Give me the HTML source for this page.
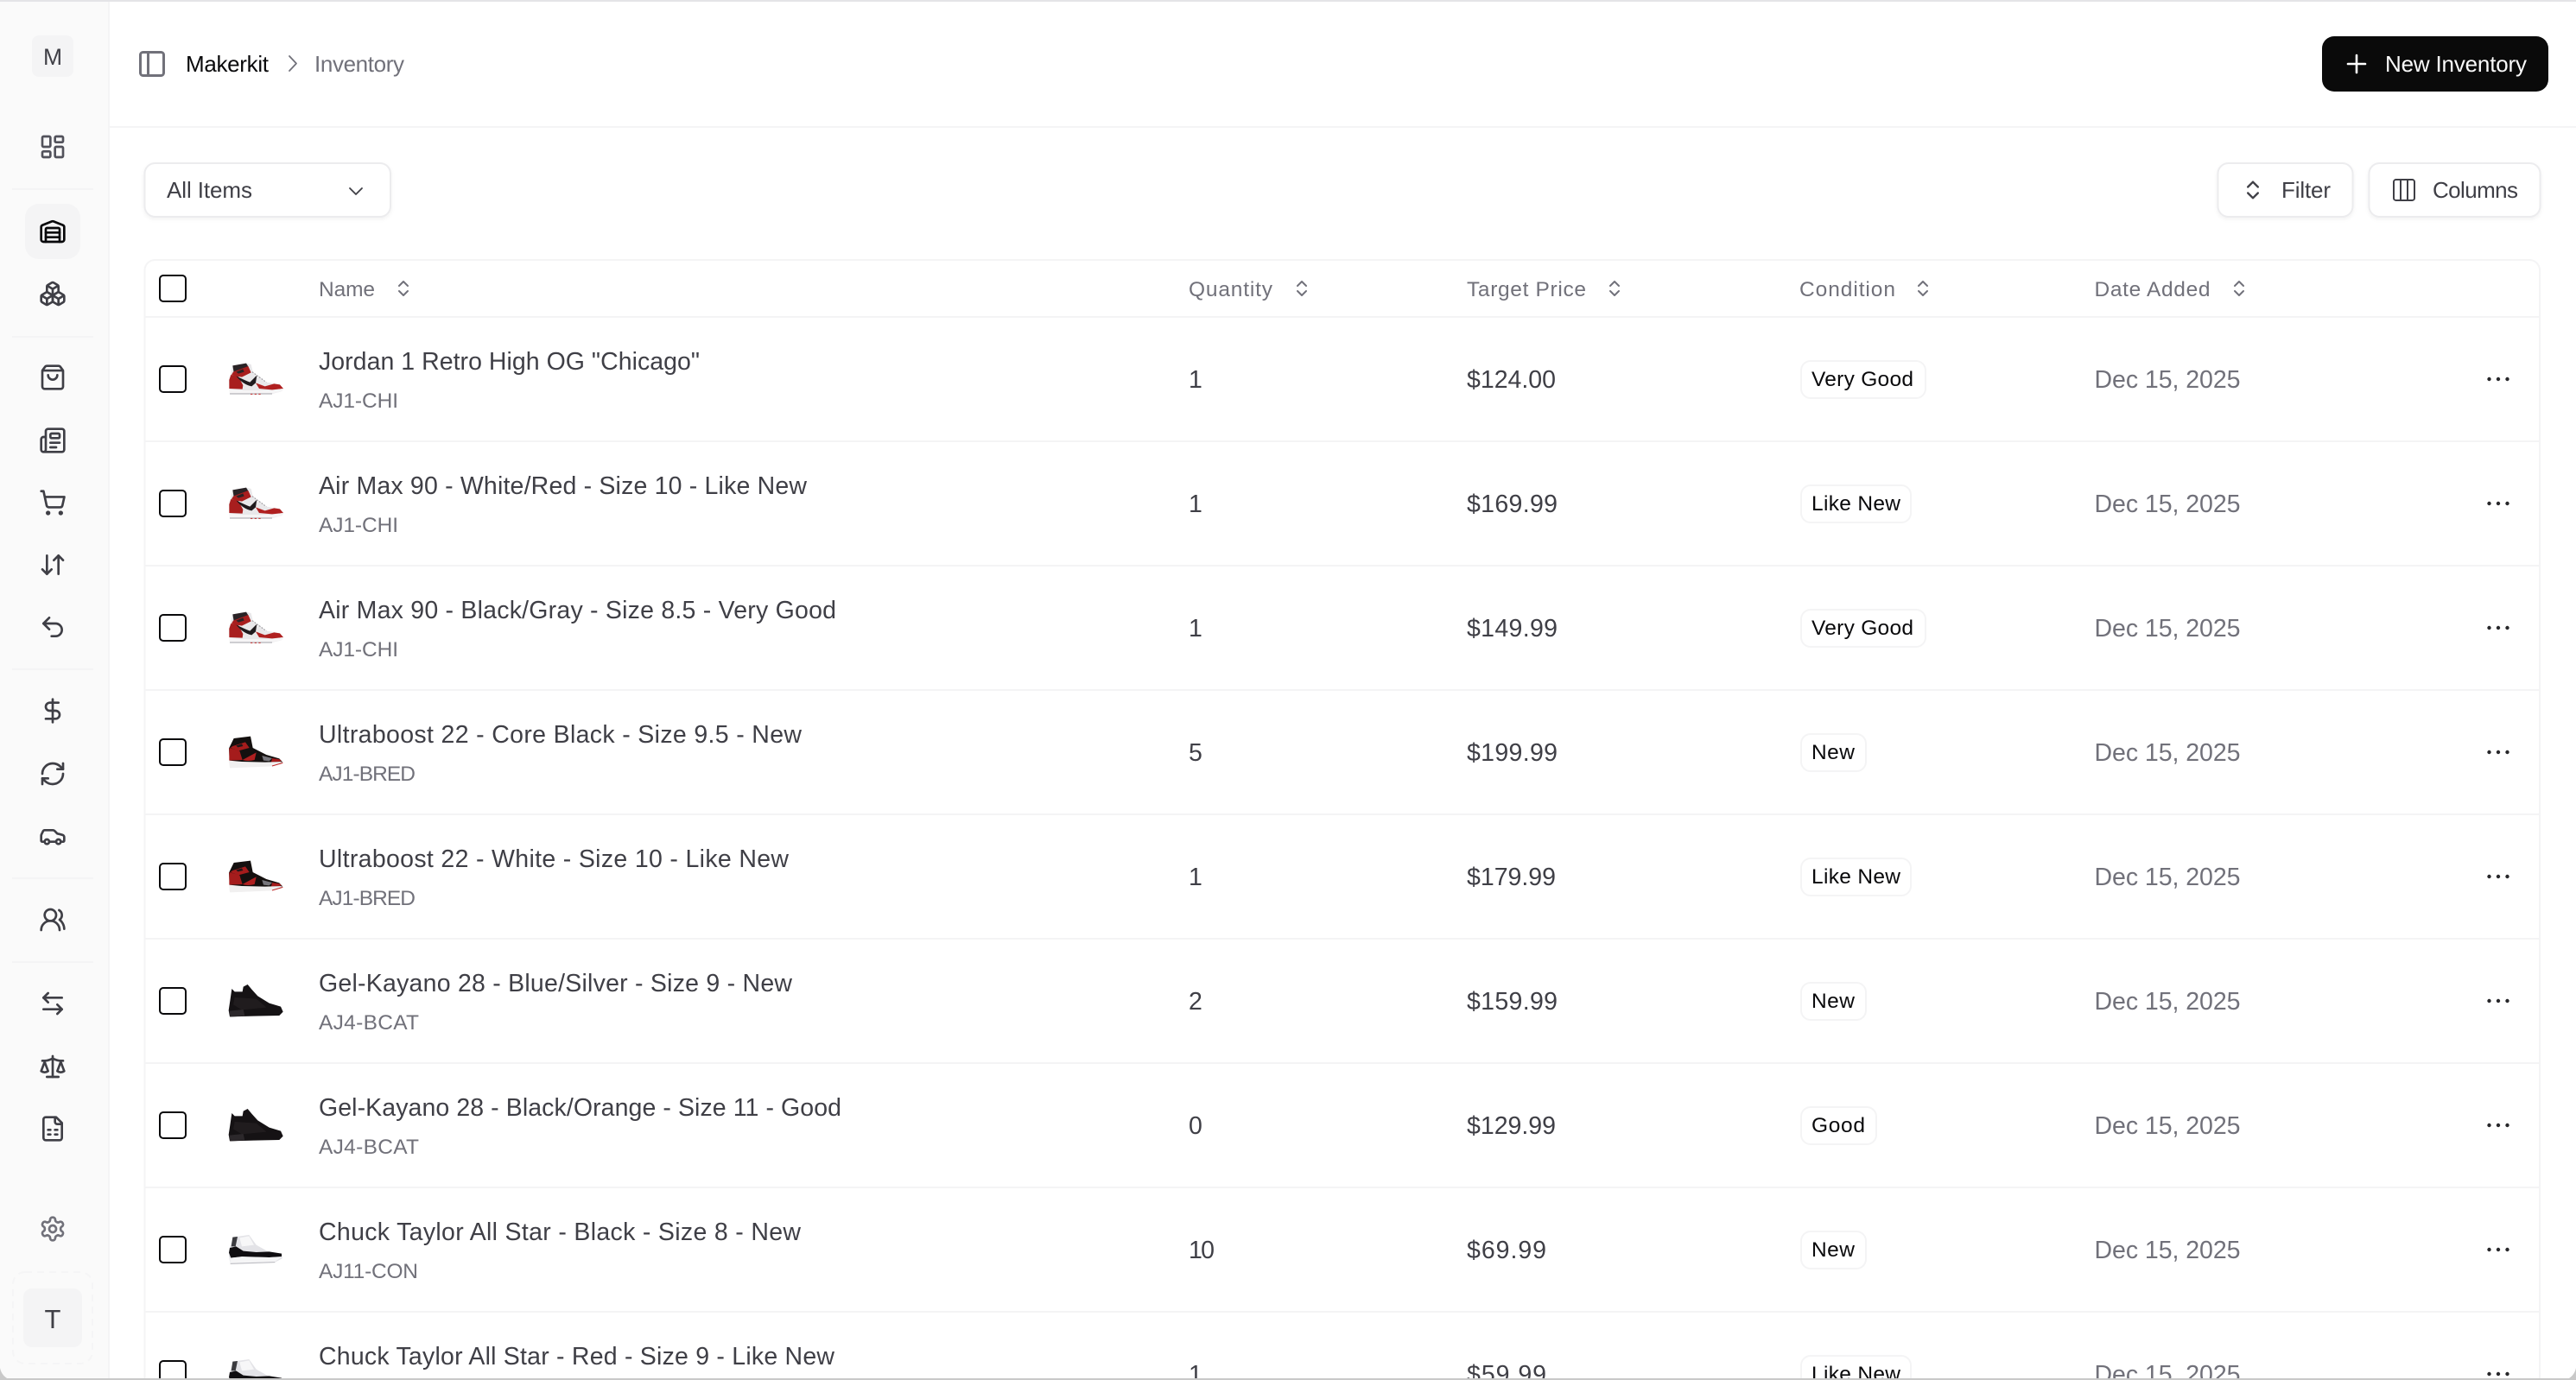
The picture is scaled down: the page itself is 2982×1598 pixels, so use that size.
<!DOCTYPE html>
<html lang="en"><head><meta charset="utf-8"><title>Inventory</title>
<style>
html,body{margin:0;padding:0;background:#fff;overflow:hidden}
svg{display:block}
text{font-family:"Liberation Sans",sans-serif;white-space:pre}
.n{font-size:28.5px;fill:#3f3f46}
.s{font-size:24.5px;fill:#71717a}
.h{font-size:24.5px;fill:#71717a}
.v{font-size:28.5px;fill:#3f3f46}
.d{font-size:28.5px;fill:#71717a}
.b{font-size:24.5px;fill:#09090b}
.t{font-size:26px}
.i{fill:none;stroke-width:2;stroke-linecap:round;stroke-linejoin:round}
</style></head><body>
<svg xmlns="http://www.w3.org/2000/svg" width="2982" height="1598" viewBox="0 0 2982 1598">
<defs>
<filter id="sh" x="-5%" y="-10%" width="110%" height="130%"><feDropShadow dx="0" dy="2" stdDeviation="2" flood-color="#000" flood-opacity=".05"/></filter>
<symbol id="dash" viewBox="0 0 24 24"><rect x="3" y="3" width="7" height="9" rx="1"/><rect x="14" y="3" width="7" height="5" rx="1"/><rect x="14" y="12" width="7" height="9" rx="1"/><rect x="3" y="16" width="7" height="5" rx="1"/></symbol>
<symbol id="ware" viewBox="0 0 24 24"><path d="M18 21V10a1 1 0 0 0-1-1H7a1 1 0 0 0-1 1v11"/><path d="M22 19a2 2 0 0 1-2 2H4a2 2 0 0 1-2-2V8.35a2 2 0 0 1 1.26-1.86l8-3.2a2 2 0 0 1 1.48 0l8 3.2A2 2 0 0 1 22 8.35z"/><path d="M6 13h12"/><path d="M6 17h12"/></symbol>
<symbol id="boxes" viewBox="0 0 24 24"><path d="M2.97 12.92A2 2 0 0 0 2 14.63v3.24a2 2 0 0 0 .97 1.71l3 1.8a2 2 0 0 0 2.06 0L12 19v-5.5l-5-3-4.03 2.42Z"/><path d="m7 16.5-4.74-2.85"/><path d="m7 16.5 5-3"/><path d="M7 16.5v5.17"/><path d="M12 13.5V19l3.97 2.38a2 2 0 0 0 2.06 0l3-1.8a2 2 0 0 0 .97-1.71v-3.24a2 2 0 0 0-.97-1.71L17 10.5l-5 3Z"/><path d="m17 16.5-5-3"/><path d="m17 16.5 4.74-2.85"/><path d="M17 16.5v5.17"/><path d="M7.97 4.42A2 2 0 0 0 7 6.13v4.37l5 3 5-3V6.13a2 2 0 0 0-.97-1.71l-3-1.8a2 2 0 0 0-2.06 0l-3 1.8Z"/><path d="M12 8 7.26 5.15"/><path d="m12 8 4.74-2.85"/><path d="M12 13.5V8"/></symbol>
<symbol id="bag" viewBox="0 0 24 24"><path d="M16 10a4 4 0 0 1-8 0"/><path d="M3.103 6.034h17.794"/><path d="M3.4 5.467a2 2 0 0 0-.4 1.2V20a2 2 0 0 0 2 2h14a2 2 0 0 0 2-2V6.667a2 2 0 0 0-.4-1.2l-2-2.667A2 2 0 0 0 17 2H7a2 2 0 0 0-1.6.8z"/></symbol>
<symbol id="news" viewBox="0 0 24 24"><path d="M15 18h-5"/><path d="M18 14h-8"/><path d="M4 22h16a2 2 0 0 0 2-2V4a2 2 0 0 0-2-2H8a2 2 0 0 0-2 2v16a2 2 0 0 1-4 0v-9a2 2 0 0 1 2-2h2"/><rect x="10" y="6" width="8" height="4" rx="1"/></symbol>
<symbol id="cart" viewBox="0 0 24 24"><circle cx="8" cy="21" r="1"/><circle cx="19" cy="21" r="1"/><path d="M2.05 2.05h2l2.66 12.42a2 2 0 0 0 2 1.58h9.78a2 2 0 0 0 1.95-1.57l1.65-7.43H5.12"/></symbol>
<symbol id="adu" viewBox="0 0 24 24"><path d="m3 16 4 4 4-4"/><path d="M7 20V4"/><path d="m21 8-4-4-4 4"/><path d="M17 4v16"/></symbol>
<symbol id="undo" viewBox="0 0 24 24"><path d="M9 14 4 9l5-5"/><path d="M4 9h10.5a5.5 5.5 0 0 1 5.5 5.5a5.5 5.5 0 0 1-5.5 5.5H11"/></symbol>
<symbol id="dollar" viewBox="0 0 24 24"><path d="M12 2v20"/><path d="M17 5H9.5a3.5 3.5 0 0 0 0 7h5a3.5 3.5 0 0 1 0 7H6"/></symbol>
<symbol id="refresh" viewBox="0 0 24 24"><path d="M3 12a9 9 0 0 1 9-9 9.75 9.75 0 0 1 6.74 2.74L21 8"/><path d="M21 3v5h-5"/><path d="M21 12a9 9 0 0 1-9 9 9.75 9.75 0 0 1-6.74-2.74L3 16"/><path d="M8 16H3v5"/></symbol>
<symbol id="car" viewBox="0 0 24 24"><path d="M19 17h2c.6 0 1-.4 1-1v-3c0-.9-.7-1.7-1.5-1.9C18.7 10.6 16 10 16 10s-1.3-1.4-2.2-2.3c-.5-.4-1.1-.7-1.8-.7H5c-.6 0-1.1.4-1.4.9l-1.4 2.9A3.7 3.7 0 0 0 2 12v4c0 .6.4 1 1 1h2"/><circle cx="7" cy="17" r="2"/><path d="M9 17h6"/><circle cx="17" cy="17" r="2"/></symbol>
<symbol id="users" viewBox="0 0 24 24"><path d="M18 21a8 8 0 0 0-16 0"/><circle cx="10" cy="8" r="5"/><path d="M22 20c0-3.37-2-6.5-4-8a5 5 0 0 0-.45-8.3"/></symbol>
<symbol id="alr" viewBox="0 0 24 24"><path d="M8 3 4 7l4 4"/><path d="M4 7h16"/><path d="m16 21 4-4-4-4"/><path d="M20 17H4"/></symbol>
<symbol id="scale" viewBox="0 0 24 24"><path d="m16 16 3-8 3 8c-.87.65-1.92 1-3 1s-2.13-.35-3-1Z"/><path d="m2 16 3-8 3 8c-.87.65-1.92 1-3 1s-2.13-.35-3-1Z"/><path d="M7 21h10"/><path d="M12 3v18"/><path d="M3 7h2c2 0 5-1 7-2 2 1 5 2 7 2h2"/></symbol>
<symbol id="file" viewBox="0 0 24 24"><path d="M15 2H6a2 2 0 0 0-2 2v16a2 2 0 0 0 2 2h12a2 2 0 0 0 2-2V7Z"/><path d="M14 2v4a2 2 0 0 0 2 2h4"/><path d="M8 13h2"/><path d="M14 13h2"/><path d="M8 17h2"/><path d="M14 17h2"/></symbol>
<symbol id="gear" viewBox="0 0 24 24"><path d="M12.22 2h-.44a2 2 0 0 0-2 2v.18a2 2 0 0 1-1 1.73l-.43.25a2 2 0 0 1-2 0l-.15-.08a2 2 0 0 0-2.73.73l-.22.38a2 2 0 0 0 .73 2.73l.15.1a2 2 0 0 1 1 1.72v.51a2 2 0 0 1-1 1.74l-.15.09a2 2 0 0 0-.73 2.73l.22.38a2 2 0 0 0 2.73.73l.15-.08a2 2 0 0 1 2 0l.43.25a2 2 0 0 1 1 1.73V20a2 2 0 0 0 2 2h.44a2 2 0 0 0 2-2v-.18a2 2 0 0 1 1-1.73l.43-.25a2 2 0 0 1 2 0l.15.08a2 2 0 0 0 2.73-.73l.22-.39a2 2 0 0 0-.73-2.73l-.15-.08a2 2 0 0 1-1-1.74v-.5a2 2 0 0 1 1-1.74l.15-.09a2 2 0 0 0 .73-2.73l-.22-.38a2 2 0 0 0-2.73-.73l-.15.08a2 2 0 0 1-2 0l-.43-.25a2 2 0 0 1-1-1.73V4a2 2 0 0 0-2-2z"/><circle cx="12" cy="12" r="3"/></symbol>
<symbol id="panel" viewBox="0 0 24 24"><rect x="3" y="3" width="18" height="18" rx="2"/><path d="M9 3v18"/></symbol>
<symbol id="cols" viewBox="0 0 24 24"><rect x="3" y="3" width="18" height="18" rx="2"/><path d="M9 3v18"/><path d="M15 3v18"/></symbol>
<symbol id="ud" viewBox="0 0 24 24"><path d="m7 15 5 5 5-5"/><path d="m7 9 5-5 5 5"/></symbol>
<symbol id="s1" viewBox="0 0 360 300">
<path fill="#e9e8ea" d="M88 100L135 92L152 96L158 122L205 158L250 165L264 180L258 190L225 198L78 198L75 150Z"/>
<path fill="#a81e1e" d="M82 132L108 138L124 168L122 182L76 180L76 150Z"/>
<path fill="#2a2326" d="M88 100L135 92L142 103L92 124Z"/>
<path fill="#a81e1e" d="M90 122L142 102L152 124L120 140L96 136L84 132Z"/>
<path fill="#2a2326" d="M100 122L124 112L128 122L108 128Z"/>
<path fill="#b02020" d="M168 160L200 172L232 163L252 166L264 180L225 184L180 180Z"/>
<path fill="#1f1a1d" d="M100 136Q128 150 148 158L172 134L168 160L154 172Q124 166 100 136Z"/>
<path fill="none" stroke="#8f8d92" stroke-width="3" stroke-dasharray="5 5" d="M156 122L205 158"/>
<path fill="#f6f5f6" d="M76 182L125 186L225 186L262 180L258 190L225 196L78 196Z"/>
<path fill="none" stroke="#a3a3a8" stroke-width="3" d="M78 198H225"/>
<path fill="none" stroke="#c02828" stroke-width="3" stroke-dasharray="7 7" d="M150 199H190"/>
</symbol>
<symbol id="s2" viewBox="0 0 360 300">
<path fill="#14100f" d="M92 75L150 68L158 108L205 132L250 145L262 158L225 166L78 166L75 110Z"/>
<path fill="#a51c1c" d="M76 108L112 118L122 150L76 152Z"/>
<path fill="#a51c1c" d="M88 102L132 88L146 108L108 118L80 108Z"/>
<path fill="#1c1719" d="M100 100L120 94L124 102L106 106Z"/>
<path fill="#b02020" d="M122 150Q140 140 170 124L164 150Q140 156 122 150Z"/>
<path fill="#77767c" d="M190 135L225 144L215 154L195 152Z"/>
<path fill="#a51c1c" d="M225 144L252 148L258 155L222 158Z"/>
<path fill="#f1f0f0" d="M75 152L120 156L200 158L262 156L225 172L78 178Z"/>
<path fill="none" stroke="#c02828" stroke-width="3" d="M225 171L262 160"/>
</symbol>
<symbol id="s3" viewBox="0 0 360 300">
<path fill="#151214" d="M85 75L95 85L122 85L125 68L140 60L155 78L175 100L215 125L255 137L263 155L250 168L160 170L78 172L74 150L80 110Z"/>
<path fill="#3a3638" d="M95 105L170 110L205 140L120 148L90 130Z" opacity=".3"/>
<path fill="#2c282b" d="M76 152L125 147L130 170L80 172Z"/>
</symbol>
<symbol id="s4" viewBox="0 0 360 300">
<path fill="#e3e3e7" d="M90 98L145 90L170 125L215 150L258 155L260 172L235 185L80 190L75 165L78 135Z"/>
<path fill="#3b3b3f" d="M88 98L105 96L98 130L83 130Z"/>
<path fill="#0f0d10" d="M78 135L100 130L125 146L170 150L215 148L258 155L258 165L215 168L120 165L82 170L75 152Z"/>
<path fill="#f5f5f6" d="M78 170L120 166L215 168L258 166L235 183L80 188Z"/>
<path fill="#f7f7f8" d="M112 100L145 94L162 125L120 130Z"/>
<path fill="none" stroke="#b9b9bf" stroke-width="3" d="M80 190L235 185"/>
</symbol>
</defs>

<rect width="2982" height="1598" fill="#fff"/>

<!-- sidebar -->
<rect x="0" y="0" width="125" height="1598" fill="#fafafa"/>
<rect x="125" y="0" width="2" height="1598" fill="#f4f4f5"/>
<rect x="37" y="41" width="48" height="48" rx="8" fill="#f4f4f5"/>
<text x="61" y="75" text-anchor="middle" font-size="26.500" fill="#3f3f46">M</text>
<rect x="29" y="236" width="64" height="64" rx="16" fill="#f4f4f5"/>
<g fill="#f4f4f5"><rect x="14" y="218" width="94" height="2"/><rect x="14" y="389" width="94" height="2"/><rect x="14" y="774" width="94" height="2"/><rect x="14" y="1016" width="94" height="2"/><rect x="14" y="1113" width="94" height="2"/></g>
<g class="i" stroke="#3f3f46">
<use href="#dash" x="45" y="154" width="32" height="32" stroke="#52525b"/>
<use href="#ware" x="45" y="252" width="32" height="32" stroke="#09090b"/>
<use href="#boxes" x="45" y="324" width="32" height="32"/>
<use href="#bag" x="45" y="421" width="32" height="32"/>
<use href="#news" x="45" y="494" width="32" height="32"/>
<use href="#cart" x="45" y="566" width="32" height="32"/>
<use href="#adu" x="45" y="638" width="32" height="32"/>
<use href="#undo" x="45" y="710" width="32" height="32"/>
<use href="#dollar" x="45" y="807" width="32" height="32"/>
<use href="#refresh" x="45" y="880" width="32" height="32"/>
<use href="#car" x="45" y="952" width="32" height="32"/>
<use href="#users" x="45" y="1049" width="32" height="32"/>
<use href="#alr" x="45" y="1146" width="32" height="32"/>
<use href="#scale" x="45" y="1219" width="32" height="32"/>
<use href="#file" x="45" y="1291" width="32" height="32"/>
<use href="#gear" x="45" y="1407" width="32" height="32" stroke="#71717a"/>
</g>
<rect x="15" y="1473" width="92" height="106" rx="14" fill="none" stroke="#f5f5f6" stroke-width="2" stroke-dasharray="8 6"/>
<rect x="27" y="1492" width="68" height="68" rx="10" fill="#f4f4f5"/>
<text x="61" y="1538" text-anchor="middle" font-size="31" fill="#3f3f46">T</text>

<!-- header -->
<rect x="127" y="146" width="2855" height="2" fill="#f4f4f5"/>
<g class="i"><use href="#panel" x="158" y="56" width="36" height="36" stroke="#71717a" style="stroke-width:2"/></g>
<text x="215" y="83" class="t" fill="#09090b" textLength="96">Makerkit</text>
<path d="M335 65l8 8.500-8 8.500" fill="none" stroke="#71717a" stroke-width="1.800" stroke-linecap="round" stroke-linejoin="round"/>
<text x="364" y="83" class="t" fill="#71717a" textLength="104">Inventory</text>
<rect x="2688" y="42" width="262" height="64" rx="14" fill="#0a0a0a"/>
<path d="M2728 64v20M2718 74h20" stroke="#fff" stroke-width="2.600" stroke-linecap="round" fill="none"/>
<text x="2761" y="83" class="t" fill="#fafafa" textLength="164">New Inventory</text>

<!-- toolbar -->
<g fill="#fff" stroke="#ececee" stroke-width="2" filter="url(#sh)">
<rect x="167.500" y="189" width="284.500" height="62" rx="12"/>
<rect x="2567.500" y="189" width="156" height="62" rx="12"/>
<rect x="2742.500" y="189" width="198" height="62" rx="12"/>
</g>
<text x="193" y="229" class="t" fill="#3f3f46" textLength="99">All Items</text>
<path d="M405 218l7 7 7-7" fill="none" stroke="#3f3f46" stroke-width="1.800" stroke-linecap="round" stroke-linejoin="round"/>
<g class="i" stroke="#3f3f46"><use href="#ud" x="2594" y="206" width="28" height="28"/>
<use href="#cols" x="2767" y="204" width="32" height="32" style="stroke-width:1.500"/></g>
<text x="2641" y="229" class="t" fill="#3f3f46" textLength="57">Filter</text>
<text x="2816" y="229" class="t" fill="#3f3f46" textLength="99">Columns</text>

<!-- table frame -->
<path d="M167.500 1598V313a12 12 0 0 1 12-12H2928a12 12 0 0 1 12 12V1598" fill="none" stroke="#f4f4f5" stroke-width="2"/>
<g fill="#f4f4f5">
<rect x="167" y="366" width="2774" height="2"/><rect x="167" y="510" width="2774" height="2"/><rect x="167" y="654" width="2774" height="2"/><rect x="167" y="798" width="2774" height="2"/><rect x="167" y="942" width="2774" height="2"/><rect x="167" y="1086" width="2774" height="2"/><rect x="167" y="1230" width="2774" height="2"/><rect x="167" y="1374" width="2774" height="2"/><rect x="167" y="1518" width="2774" height="2"/>
</g>

<!-- table head -->
<rect x="185" y="319" width="30" height="30" rx="4" fill="#fff" stroke="#09090b" stroke-width="2"/>
<text x="369" y="343" class="h" textLength="65">Name</text>
<text x="1376" y="343" class="h" textLength="97">Quantity</text>
<text x="1698" y="343" class="h" textLength="138">Target Price</text>
<text x="2083" y="343" class="h" textLength="111">Condition</text>
<text x="2424.500" y="343" class="h" textLength="134">Date Added</text>
<g class="i" stroke="#71717a">
<use href="#ud" x="455" y="322" width="24" height="24"/>
<use href="#ud" x="1495" y="322" width="24" height="24"/>
<use href="#ud" x="1857" y="322" width="24" height="24"/>
<use href="#ud" x="2214" y="322" width="24" height="24"/>
<use href="#ud" x="2580" y="322" width="24" height="24"/>
</g>

<!-- checkboxes -->
<g fill="#fff" stroke="#09090b" stroke-width="2">
<rect x="185" y="424" width="30" height="30" rx="4"/><rect x="185" y="568" width="30" height="30" rx="4"/><rect x="185" y="712" width="30" height="30" rx="4"/><rect x="185" y="856" width="30" height="30" rx="4"/><rect x="185" y="1000" width="30" height="30" rx="4"/><rect x="185" y="1144" width="30" height="30" rx="4"/><rect x="185" y="1288" width="30" height="30" rx="4"/><rect x="185" y="1432" width="30" height="30" rx="4"/><rect x="185" y="1576" width="30" height="30" rx="4"/>
</g>

<!-- shoes -->
<use href="#s1" x="240" y="390" width="120" height="100"/>
<use href="#s1" x="240" y="534" width="120" height="100"/>
<use href="#s1" x="240" y="678" width="120" height="100"/>
<use href="#s2" x="240" y="830" width="120" height="100"/>
<use href="#s2" x="240" y="974" width="120" height="100"/>
<use href="#s3" x="240" y="1120" width="120" height="100"/>
<use href="#s3" x="240" y="1264" width="120" height="100"/>
<use href="#s4" x="240" y="1400" width="120" height="100"/>
<use href="#s4" x="240" y="1544" width="120" height="100"/>

<!-- row 1 -->
<text x="369" y="428" class="n" textLength="441">Jordan 1 Retro High OG "Chicago"</text>
<text x="369" y="472" class="s" textLength="92">AJ1-CHI</text>
<text x="1376" y="449" class="v">1</text>
<text x="1698" y="449" class="v" textLength="103">$124.00</text>
<rect x="2085" y="418" width="144" height="43" rx="11" fill="#fff" stroke="#f4f4f5" stroke-width="2"/>
<text x="2097" y="447" class="b" textLength="118">Very Good</text>
<text x="2424.500" y="449" class="d" textLength="169">Dec 15, 2025</text>
<!-- row 2 -->
<text x="369" y="572" class="n" textLength="565">Air Max 90 - White/Red - Size 10 - Like New</text>
<text x="369" y="616" class="s" textLength="92">AJ1-CHI</text>
<text x="1376" y="593" class="v">1</text>
<text x="1698" y="593" class="v" textLength="105">$169.99</text>
<rect x="2085" y="562" width="127" height="43" rx="11" fill="#fff" stroke="#f4f4f5" stroke-width="2"/>
<text x="2097" y="591" class="b" textLength="103">Like New</text>
<text x="2424.500" y="593" class="d" textLength="169">Dec 15, 2025</text>
<!-- row 3 -->
<text x="369" y="716" class="n" textLength="599">Air Max 90 - Black/Gray - Size 8.5 - Very Good</text>
<text x="369" y="760" class="s" textLength="92">AJ1-CHI</text>
<text x="1376" y="737" class="v">1</text>
<text x="1698" y="737" class="v" textLength="105">$149.99</text>
<rect x="2085" y="706" width="144" height="43" rx="11" fill="#fff" stroke="#f4f4f5" stroke-width="2"/>
<text x="2097" y="735" class="b" textLength="118">Very Good</text>
<text x="2424.500" y="737" class="d" textLength="169">Dec 15, 2025</text>
<!-- row 4 -->
<text x="369" y="860" class="n" textLength="559">Ultraboost 22 - Core Black - Size 9.5 - New</text>
<text x="369" y="904" class="s" textLength="112">AJ1-BRED</text>
<text x="1376" y="881" class="v">5</text>
<text x="1698" y="881" class="v" textLength="105">$199.99</text>
<rect x="2085" y="850" width="75" height="43" rx="11" fill="#fff" stroke="#f4f4f5" stroke-width="2"/>
<text x="2097" y="879" class="b" textLength="50">New</text>
<text x="2424.500" y="881" class="d" textLength="169">Dec 15, 2025</text>
<!-- row 5 -->
<text x="369" y="1004" class="n" textLength="544">Ultraboost 22 - White - Size 10 - Like New</text>
<text x="369" y="1048" class="s" textLength="112">AJ1-BRED</text>
<text x="1376" y="1025" class="v">1</text>
<text x="1698" y="1025" class="v" textLength="103">$179.99</text>
<rect x="2085" y="994" width="127" height="43" rx="11" fill="#fff" stroke="#f4f4f5" stroke-width="2"/>
<text x="2097" y="1023" class="b" textLength="103">Like New</text>
<text x="2424.500" y="1025" class="d" textLength="169">Dec 15, 2025</text>
<!-- row 6 -->
<text x="369" y="1148" class="n" textLength="548">Gel-Kayano 28 - Blue/Silver - Size 9 - New</text>
<text x="369" y="1192" class="s" textLength="116">AJ4-BCAT</text>
<text x="1376" y="1169" class="v">2</text>
<text x="1698" y="1169" class="v" textLength="105">$159.99</text>
<rect x="2085" y="1138" width="75" height="43" rx="11" fill="#fff" stroke="#f4f4f5" stroke-width="2"/>
<text x="2097" y="1167" class="b" textLength="50">New</text>
<text x="2424.500" y="1169" class="d" textLength="169">Dec 15, 2025</text>
<!-- row 7 -->
<text x="369" y="1292" class="n" textLength="605">Gel-Kayano 28 - Black/Orange - Size 11 - Good</text>
<text x="369" y="1336" class="s" textLength="116">AJ4-BCAT</text>
<text x="1376" y="1313" class="v">0</text>
<text x="1698" y="1313" class="v" textLength="103">$129.99</text>
<rect x="2085" y="1282" width="87" height="43" rx="11" fill="#fff" stroke="#f4f4f5" stroke-width="2"/>
<text x="2097" y="1311" class="b" textLength="62">Good</text>
<text x="2424.500" y="1313" class="d" textLength="169">Dec 15, 2025</text>
<!-- row 8 -->
<text x="369" y="1436" class="n" textLength="558">Chuck Taylor All Star - Black - Size 8 - New</text>
<text x="369" y="1480" class="s" textLength="115">AJ11-CON</text>
<text x="1376" y="1457" class="v" textLength="30">10</text>
<text x="1698" y="1457" class="v" textLength="92">$69.99</text>
<rect x="2085" y="1426" width="75" height="43" rx="11" fill="#fff" stroke="#f4f4f5" stroke-width="2"/>
<text x="2097" y="1455" class="b" textLength="50">New</text>
<text x="2424.500" y="1457" class="d" textLength="169">Dec 15, 2025</text>
<!-- row 9 -->
<text x="369" y="1580" class="n" textLength="597">Chuck Taylor All Star - Red - Size 9 - Like New</text>
<text x="1376" y="1601" class="v">1</text>
<text x="1698" y="1601" class="v" textLength="92">$59.99</text>
<rect x="2085" y="1570" width="127" height="43" rx="11" fill="#fff" stroke="#f4f4f5" stroke-width="2"/>
<text x="2097" y="1599" class="b" textLength="103">Like New</text>
<text x="2424.500" y="1601" class="d" textLength="169">Dec 15, 2025</text>

<!-- row menus -->
<g fill="#27272a">
<circle cx="2881.500" cy="439" r="2.200"/><circle cx="2892" cy="439" r="2.200"/><circle cx="2902.500" cy="439" r="2.200"/>
<circle cx="2881.500" cy="583" r="2.200"/><circle cx="2892" cy="583" r="2.200"/><circle cx="2902.500" cy="583" r="2.200"/>
<circle cx="2881.500" cy="727" r="2.200"/><circle cx="2892" cy="727" r="2.200"/><circle cx="2902.500" cy="727" r="2.200"/>
<circle cx="2881.500" cy="871" r="2.200"/><circle cx="2892" cy="871" r="2.200"/><circle cx="2902.500" cy="871" r="2.200"/>
<circle cx="2881.500" cy="1015" r="2.200"/><circle cx="2892" cy="1015" r="2.200"/><circle cx="2902.500" cy="1015" r="2.200"/>
<circle cx="2881.500" cy="1159" r="2.200"/><circle cx="2892" cy="1159" r="2.200"/><circle cx="2902.500" cy="1159" r="2.200"/>
<circle cx="2881.500" cy="1303" r="2.200"/><circle cx="2892" cy="1303" r="2.200"/><circle cx="2902.500" cy="1303" r="2.200"/>
<circle cx="2881.500" cy="1447" r="2.200"/><circle cx="2892" cy="1447" r="2.200"/><circle cx="2902.500" cy="1447" r="2.200"/>
<circle cx="2881.500" cy="1591" r="2.200"/><circle cx="2892" cy="1591" r="2.200"/><circle cx="2902.500" cy="1591" r="2.200"/>
</g>

<!-- window edges -->
<rect x="0" y="0" width="2982" height="2" fill="#e4e4e7"/>
<rect x="0" y="1596" width="2982" height="2" fill="#c9c9c9"/>
<path d="M0 1584Q2 1594 12 1598H0Z" fill="#c9c9c9"/>
<path d="M2982 1584Q2980 1594 2970 1598H2982Z" fill="#c9c9c9"/>
</svg>
</body></html>
